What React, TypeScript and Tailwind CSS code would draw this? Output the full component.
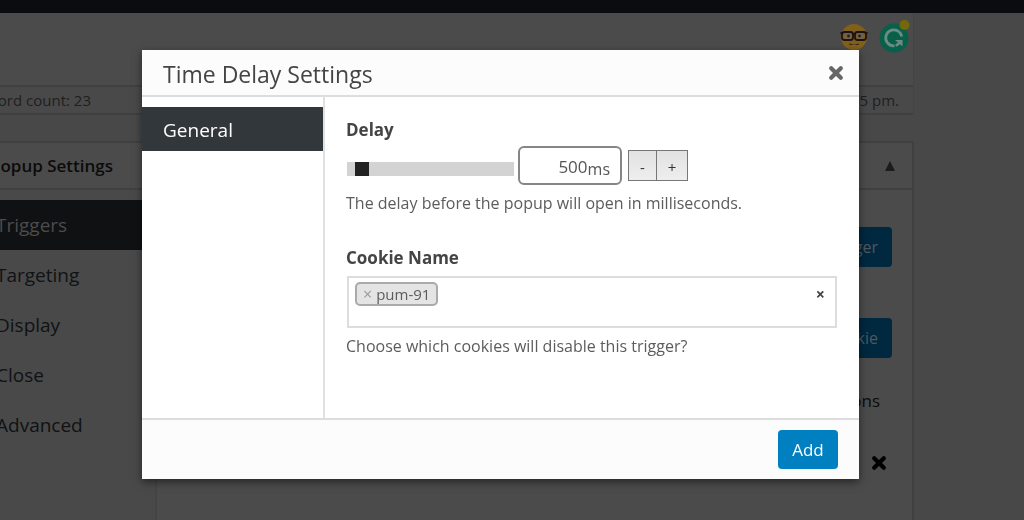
import { useState } from "react";
import type { ReactNode } from "react";

const tabs = ["Triggers", "Targeting", "Display", "Close", "Advanced"];

function CrossIcon({ className = "" }: { className?: string }) {
  return (
    <svg viewBox="0 0 16 16" className={`h-4 w-4 ${className}`} aria-hidden="true">
      <path d="M3.2 3.2L12.8 12.8M12.8 3.200L3.200 12.800" stroke="currentColor" strokeWidth="4.2" strokeLinecap="round" fill="none" />
    </svg>
  );
}

function NerdIcon() {
  return (
    <svg viewBox="0 0 28 28" className="h-7 w-7" aria-hidden="true">
      <circle cx="14" cy="14" r="13" fill="#80601a" />
      <circle cx="8" cy="13" r="3.5" fill="#6e624c" />
      <circle cx="20" cy="13" r="3.5" fill="#6e624c" />
      <rect x="2" y="9" width="11" height="8" rx="2.5" fill="none" stroke="#1d1216" strokeWidth="1.8" />
      <rect x="15" y="9" width="11" height="8" rx="2.5" fill="none" stroke="#1d1216" strokeWidth="1.8" />
      <path d="M12.5 11h3M0.5 10h2M25.5 10h2" stroke="#1d1216" strokeWidth="1.8" />
      <circle cx="8.5" cy="13" r="1.4" fill="#2d1c16" />
      <circle cx="19.5" cy="13" r="1.4" fill="#2d1c16" />
      <path d="M9 21q5 1.5 10 0" stroke="#3c2212" strokeWidth="1.2" fill="none" />
      <path d="M12.5 21.500h1.300v1.500h-1.300zM14.200 21.500h1.300v1.500h-1.300z" fill="#77705e" />
    </svg>
  );
}

function GrammarIcon() {
  return (
    <svg viewBox="0 0 32 34" className="h-[34px] w-8" aria-hidden="true">
      <circle cx="15" cy="19" r="14.5" fill="#06604a" />
      <path d="M20 12.800A8 8 0 1 0 15.500 26.800" fill="none" stroke="#6f8a82" strokeWidth="2.800" />
      <path d="M20 12.800A8 8 0 0 1 22.800 17.500" fill="none" stroke="#6f8a82" strokeWidth="2.800" />
      <path d="M16 21h7.500v6.500l-2.300-2.300-3.700 2.600-1.500-2 3-2.400z" fill="#6f8a82" />
      <circle cx="25.5" cy="6" r="5" fill="#75680a" />
    </svg>
  );
}

function BackgroundPage() {
  return (
    <div className="min-h-screen overflow-hidden bg-[#484848]">
      <div className="h-[13px] bg-[#0b0c10]" />
      <main className="-ml-5 mr-[110px]">
        <section className="border-r border-[#444444] bg-[#4b4b4b]">
          <div className="flex h-[72px] justify-end gap-[11px] pt-1.5 pr-0.5">
            <div className="pt-1">
              <NerdIcon />
            </div>
            <GrammarIcon />
          </div>
          <div className="flex h-[30px] items-center justify-between border-y-2 border-[#404040] bg-[#494949] pr-3.5 pl-1 text-[15px] text-[#1f1f1f]">
            <span>Word count: 23</span>
            <span>Last edited at 4:05 pm.</span>
          </div>
        </section>

        <section className="mt-[26px] border-2 border-[#404040] bg-[#4b4b4b]">
          <header className="flex h-[47px] items-center justify-between border-b-2 border-[#404040] pr-4 pl-2 text-[#0b0b0b]">
            <h2 className="text-[17px] font-semibold">Popup Settings</h2>
            <button type="button" aria-label="Toggle panel" className="text-[#1c1c1c]">
              <svg viewBox="0 0 12 10" className="h-2.5 w-3" aria-hidden="true">
                <path d="M6 0L11 10H1z" fill="currentColor" />
              </svg>
            </button>
          </header>
          <div className="flex">
            <nav className="w-[175px] border-r-2 border-[#444444] bg-[#494949] pt-2.5 pb-24">
              {tabs.map((tab) => (
                <a
                  key={tab}
                  href={`#${tab.toLowerCase()}`}
                  className={`flex h-[50px] items-center pl-3.5 text-[19px] ${
                    tab === "Triggers" ? "bg-[#0f1112] text-[#4c4c4c]" : "text-[#101214]"
                  }`}
                >
                  {tab}
                </a>
              ))}
            </nav>
            <div className="flex flex-1 flex-col items-end pt-[37px] pr-[20px]">
              <button type="button" className="h-10 rounded bg-[#00283f] px-3.5 text-[16px] text-[#4c5962]">
                Add New Trigger
              </button>
              <button type="button" className="mt-[51px] h-10 rounded bg-[#00283f] px-3.5 text-[16px] text-[#4c5962]">
                Add New Cookie
              </button>
              <span className="mt-[30px] pr-3 text-[17px] font-medium text-[#0b0b0b]">Actions</span>
              <button type="button" aria-label="Delete cookie" className="mt-[41px] mr-[5px] text-black">
                <CrossIcon />
              </button>
            </div>
          </div>
        </section>
      </main>
    </div>
  );
}

function Field({ label, htmlFor, help, children }: { label: string; htmlFor: string; help: string; children: ReactNode }) {
  return (
    <div>
      <label htmlFor={htmlFor} className="block text-[17px] leading-6 font-bold text-[#444444]">
        {label}
      </label>
      {children}
      <p className="text-[16px] leading-6 text-[#5c5c5c]">{help}</p>
    </div>
  );
}

function DelayControl() {
  const [delay, setDelay] = useState(500);
  const step = (amount: number) => setDelay((d) => Math.min(10000, Math.max(0, d + amount)));
  const buttonClass =
    "h-[31px] border border-[#777777] bg-linear-to-b from-[#e2e2e2] to-[#eeeeee] pt-1 text-[15px] text-[#333333]";

  return (
    <div className="mt-1 mb-1.5 flex items-center">
      <input
        type="range"
        aria-label="Delay slider"
        min={0}
        max={10000}
        step={100}
        value={delay}
        onChange={(e) => setDelay(Number(e.target.value))}
        className="mt-1.5 ml-px h-3.5 w-[167px] appearance-none bg-[#d3d3d3] [&::-webkit-slider-thumb]:h-3.5 [&::-webkit-slider-thumb]:w-3.5 [&::-webkit-slider-thumb]:appearance-none [&::-webkit-slider-thumb]:bg-[#222222]"
      />
      <div className="ml-1 flex h-[39px] w-[104px] items-center rounded-md border-2 border-[#84878a] pt-0.5 pr-2.5 text-[#555555]">
        <input
          id="delay"
          type="text"
          value={delay}
          onChange={(e) => setDelay(Number(e.target.value) || 0)}
          className="w-full min-w-0 text-right text-[17px] outline-none"
        />
        <span className="pt-1 text-[16px]">ms</span>
      </div>
      <button type="button" aria-label="Decrease" onClick={() => step(-100)} className={`ml-1.5 w-[29px] ${buttonClass}`}>
        -
      </button>
      <button type="button" aria-label="Increase" onClick={() => step(100)} className={`-ml-px w-8 ${buttonClass}`}>
        +
      </button>
    </div>
  );
}

function CookieControl() {
  return (
    <div className="mt-1.5 mb-1.5 ml-px flex min-h-[52px] items-start border-2 border-[#dddddd] pt-1 pr-2.5 pl-1.5">
      <span className="flex h-6 items-center gap-1 rounded-[5px] border-2 border-[#aaaaaa] bg-[#e4e4e4] px-1.5 text-[15px] text-[#5c5c5c]">
        <button type="button" aria-label="Remove pum-91" className="text-[16px] text-[#999999]">
          ×
        </button>
        pum-91
      </span>
      <input id="cookie" type="text" className="h-6 min-w-0 flex-1 outline-none" />
      <button type="button" aria-label="Clear all" className="h-6 text-[16px] font-bold text-[#444444]">
        ×
      </button>
    </div>
  );
}

export default function App() {
  return (
    <div className="h-screen overflow-hidden font-['Open_Sans','Noto_Sans',sans-serif]">
      <BackgroundPage />
      <div className="fixed inset-0 flex items-start justify-center pt-[50px] pr-[23px]">
        <div
          role="dialog"
          aria-labelledby="modal-title"
          className="w-full max-w-[717px] bg-white shadow-[0_3px_8px_rgba(0,0,0,0.5)]"
        >
          <header className="flex h-[47px] items-center justify-between border-b-2 border-[#dddddd] bg-[#fcfcfc] pr-[15px] pl-[21px]">
            <h1 id="modal-title" className="pt-1 text-[23px] font-medium text-[#444444]">
              Time Delay Settings
            </h1>
            <button type="button" aria-label="Close" className="text-[#666666]">
              <CrossIcon />
            </button>
          </header>

          <div className="flex min-h-[321px]">
            <nav className="w-[183px] shrink-0 border-r-2 border-[#e1e1e1] pt-2.5">
              <a href="#general" className="flex h-11 items-center bg-[#32373c] pt-0.5 pl-[21px] text-[19px] text-white">
                General
              </a>
            </nav>
            <div className="flex flex-1 flex-col gap-[31px] pt-[21px] pr-[22px] pl-[21px]">
              <Field label="Delay" htmlFor="delay" help="The delay before the popup will open in milliseconds.">
                <DelayControl />
              </Field>
              <Field label="Cookie Name" htmlFor="cookie" help="Choose which cookies will disable this trigger?">
                <CookieControl />
              </Field>
            </div>
          </div>

          <footer className="flex h-[61px] items-center justify-end border-t-2 border-[#dddddd] bg-[#fcfcfc] pr-[21px]">
            <button type="button" className="h-[39px] w-[60px] rounded bg-[#0080c0] text-[17px] text-white">
              Add
            </button>
          </footer>
        </div>
      </div>
    </div>
  );
}
